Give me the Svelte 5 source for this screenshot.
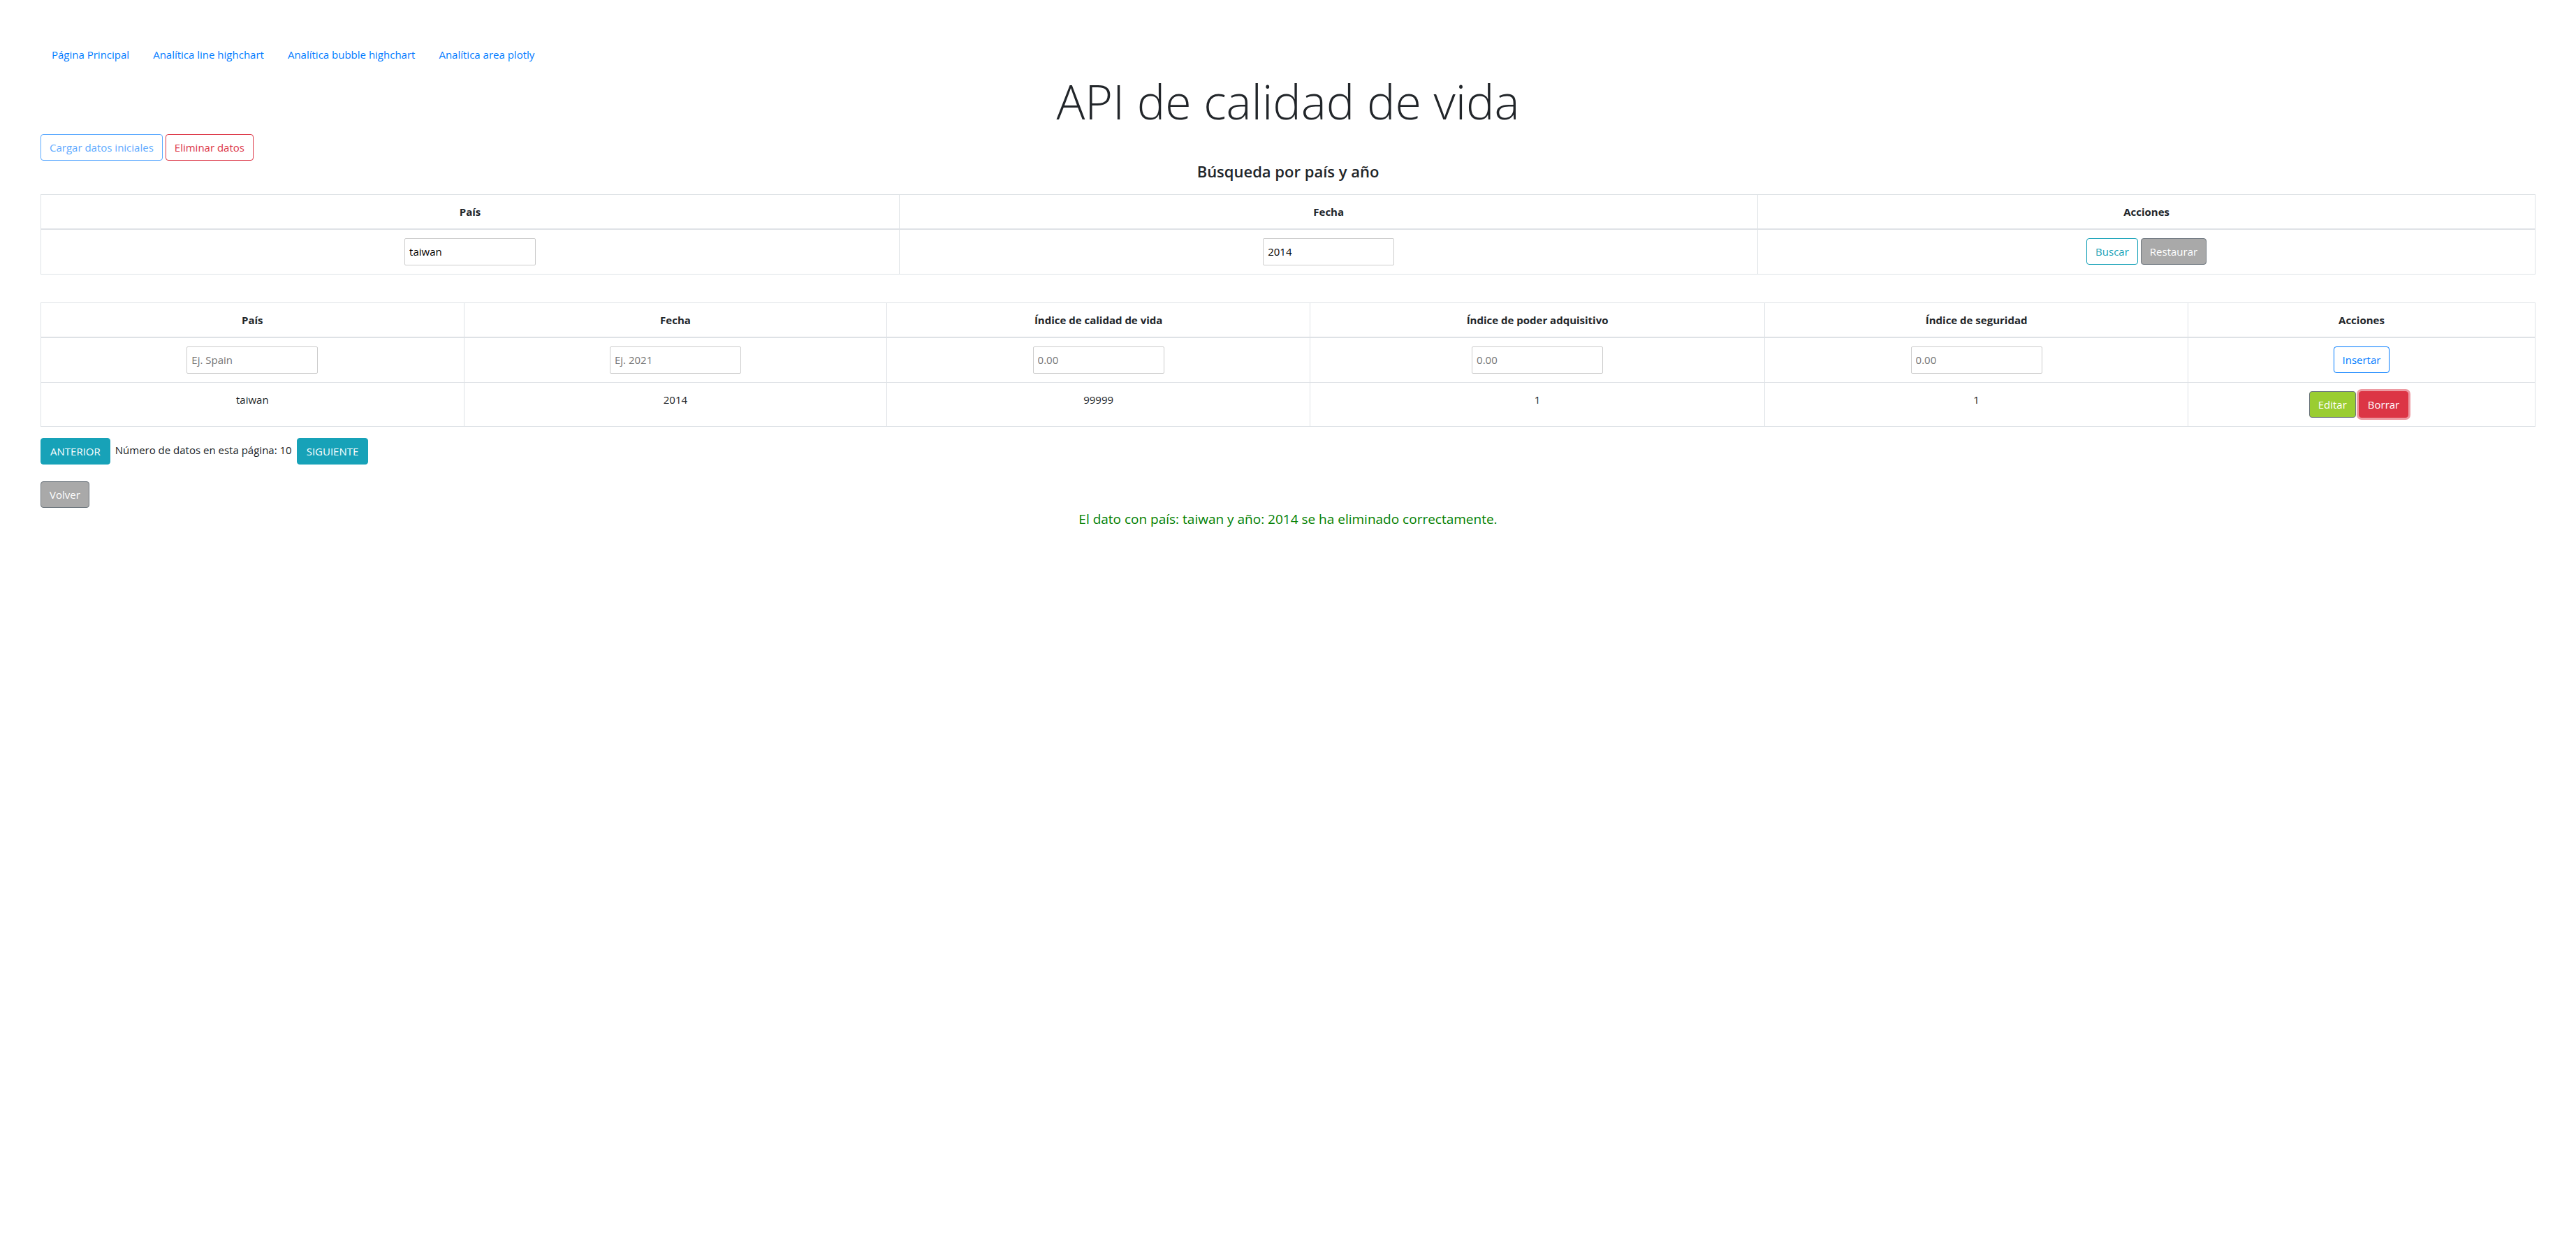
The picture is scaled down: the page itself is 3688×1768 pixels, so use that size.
<script>
  const links = [
    'Página Principal',
    'Analítica line highchart',
    'Analítica bubble highchart',
    'Analítica area plotly'
  ];

  let search = $state({ country: 'taiwan', year: '2014' });
  let draft = $state({ country: '', year: '', quality: '', power: '', safety: '' });

  const fields = [
    { key: 'country', label: 'País', hint: 'Ej. Spain' },
    { key: 'year', label: 'Fecha', hint: 'Ej. 2021' },
    { key: 'quality', label: 'Índice de calidad de vida', hint: '0.00' },
    { key: 'power', label: 'Índice de poder adquisitivo', hint: '0.00' },
    { key: 'safety', label: 'Índice de seguridad', hint: '0.00' }
  ];

  const rows = [{ country: 'taiwan', year: 2014, quality: 99999, power: 1, safety: 1 }];
</script>

<main>
  <nav>
    {#each links as link}
      <a href="#top">{link}</a>
    {/each}
  </nav>

  <h1>API de calidad de vida</h1>

  <div class="bar">
    <button class="btn outline-primary" disabled>Cargar datos iniciales</button>
    <button class="btn outline-danger">Eliminar datos</button>
  </div>

  <h2>Búsqueda por país y año</h2>

  <table class="search">
    <colgroup>
      <col class="wide" />
      <col class="wide" />
      <col />
    </colgroup>
    <thead>
      <tr>
        <th>País</th>
        <th>Fecha</th>
        <th>Acciones</th>
      </tr>
    </thead>
    <tbody>
      <tr>
        <td><input type="text" aria-label="Buscar país" bind:value={search.country} /></td>
        <td><input type="text" aria-label="Buscar fecha" bind:value={search.year} /></td>
        <td>
          <div class="actions">
            <button class="btn outline-info">Buscar</button>
            <button class="btn gray">Restaurar</button>
          </div>
        </td>
      </tr>
    </tbody>
  </table>

  <table class="data">
    <colgroup>
      <col class="std" />
      <col class="std" />
      <col class="std" />
      <col class="power" />
      <col class="std" />
      <col />
    </colgroup>
    <thead>
      <tr>
        {#each fields as field}
          <th>{field.label}</th>
        {/each}
        <th>Acciones</th>
      </tr>
    </thead>
    <tbody>
      <tr>
        {#each fields as field}
          <td>
            <input
              type="text"
              aria-label={field.label}
              placeholder={field.hint}
              bind:value={draft[field.key]}
            />
          </td>
        {/each}
        <td>
          <div class="actions">
            <button class="btn outline-primary">Insertar</button>
          </div>
        </td>
      </tr>
      {#each rows as row}
        <tr>
          {#each fields as field}
            <td>{row[field.key]}</td>
          {/each}
          <td>
            <div class="actions row-actions">
              <button class="btn green">Editar</button>
              <button class="btn danger">Borrar</button>
            </div>
          </td>
        </tr>
      {/each}
    </tbody>
  </table>

  <div class="bar pager">
    <button class="btn info">ANTERIOR</button>
    <span>Número de datos en esta página: 10</span>
    <button class="btn info">SIGUIENTE</button>
  </div>

  <div class="bar">
    <button class="btn gray">Volver</button>
  </div>

  <p class="message" role="status">
    El dato con país: taiwan y año: 2014 se ha eliminado correctamente.
  </p>
</main>

<style>
  :global(body) {
    margin: 0;
    background: #fff;
  }

  main {
    padding: 58px;
    color: #212529;
    font-family: 'Open Sans', 'Noto Sans', sans-serif;
    font-size: 15px;
    line-height: 24px;
  }

  nav {
    display: flex;
    gap: 2px;
  }

  nav a {
    padding: 8px 16px;
    color: #007bff;
    text-decoration: none;
  }

  h1 {
    margin: 0;
    font-size: 68px;
    font-weight: 300;
    line-height: 94px;
    text-align: center;
  }

  .bar {
    display: flex;
    gap: 4px;
  }

  h2 {
    margin: 0 0 18px;
    font-size: 22px;
    font-weight: 600;
    line-height: 30px;
    text-align: center;
  }

  table {
    width: 100%;
    table-layout: fixed;
    border-collapse: collapse;
    text-align: center;
  }

  .search {
    margin-bottom: 40px;
  }

  .data {
    margin-bottom: 16px;
  }

  .wide {
    width: 34.42%;
  }

  .std {
    width: 16.96%;
  }

  .power {
    width: 18.24%;
  }

  th,
  td {
    padding: 12px;
    border: 1px solid #dee2e6;
    vertical-align: top;
  }

  th {
    border-bottom-width: 2px;
    font-weight: 700;
  }

  input {
    display: block;
    box-sizing: border-box;
    width: 188px;
    height: 39px;
    margin: 0 auto;
    padding: 5px 6px 7px;
    border: 1px solid #ccc;
    border-radius: 2px;
    background: #fff;
    color: #000;
    font: inherit;
  }

  input::placeholder {
    color: #757575;
  }

  .actions {
    display: flex;
    justify-content: center;
    gap: 4px;
  }

  .row-actions {
    padding-right: 8px;
  }

  .btn {
    padding: 6px 12px;
    border: 1px solid transparent;
    border-radius: 4px;
    background: transparent;
    font: inherit;
    cursor: pointer;
  }

  .btn:disabled {
    cursor: default;
    opacity: 0.65;
  }

  .outline-primary {
    border-color: #007bff;
    color: #007bff;
  }

  .outline-danger {
    border-color: #dc3545;
    color: #dc3545;
  }

  .outline-info {
    border-color: #17a2b8;
    color: #17a2b8;
  }

  .gray {
    border-color: #6c757d;
    background: darkgray;
    color: #fff;
  }

  .green {
    border-color: #6c757d;
    background: yellowgreen;
    color: #fff;
  }

  .danger {
    border-color: #dc3545;
    background: #dc3545;
    box-shadow: 0 0 0 3px rgba(220, 53, 69, 0.5);
    color: #fff;
  }

  .info {
    padding: 6px 13px;
    border-color: #17a2b8;
    background: #17a2b8;
    color: #fff;
  }

  .pager {
    margin-bottom: 24px;
  }

  .pager span {
    padding: 5px 3px 0;
  }

  .message {
    margin: 0;
    color: green;
    font-size: 19px;
    line-height: 32px;
    text-align: center;
  }
</style>
